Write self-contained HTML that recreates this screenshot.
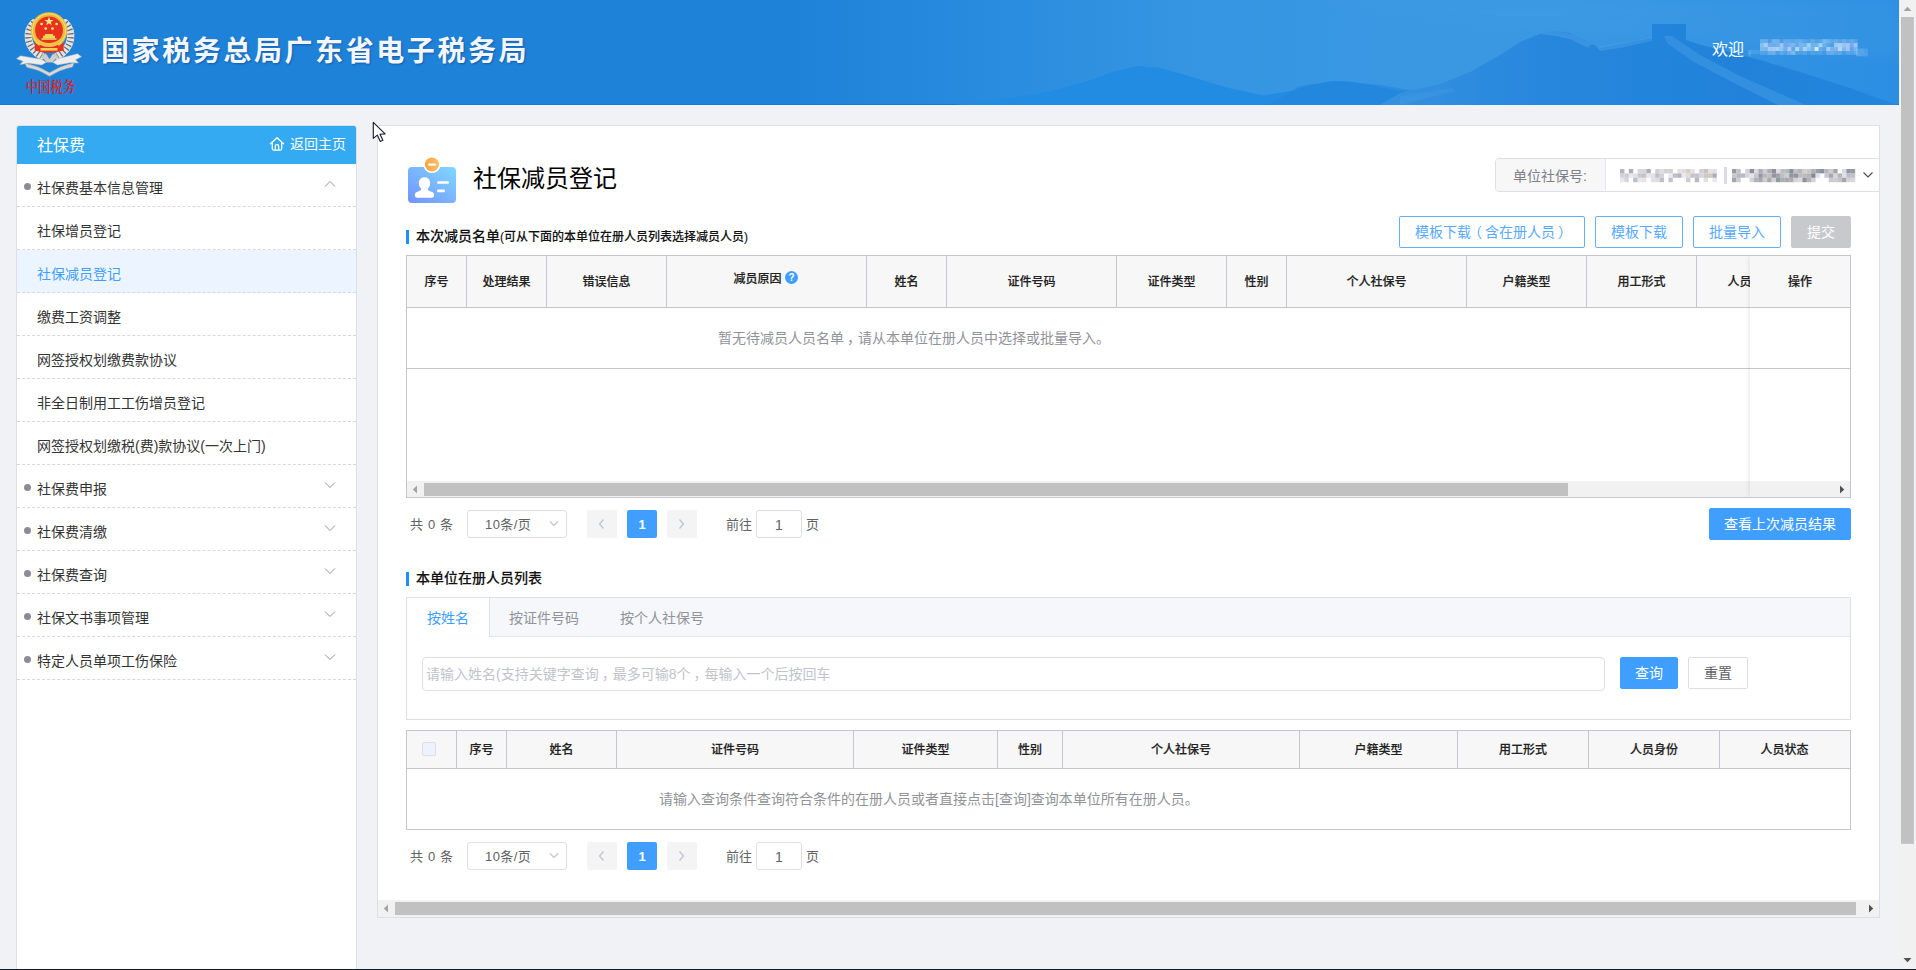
<!DOCTYPE html>
<html lang="zh-CN">
<head>
<meta charset="utf-8">
<title>社保减员登记</title>
<style>
*{box-sizing:border-box;margin:0;padding:0}
html,body{width:1916px;height:970px;overflow:hidden;background:#f0f2f5}
body{font-family:"Liberation Sans","Noto Sans CJK SC",sans-serif;font-size:14px;color:#333;position:relative}
.abs{position:absolute}
#hdr{left:0;top:0;width:1899px;height:105px;background:linear-gradient(90deg,#1e82d9 0,#1e82d9 790px,#2487db 900px,#2b8ddf 1017px,#3595e2 1184px,#3a98e3 1400px,#3a98e3 1560px,#3293e3 1760px,#2b8ee2 1899px);box-shadow:inset 0 -1px 0 #1479d6;overflow:hidden}
#hdr .ttl{left:101px;top:30px;font-size:28px;line-height:44px;font-weight:700;color:#f3f6fa;letter-spacing:2.58px;white-space:nowrap;text-shadow:1px 1px 2px rgba(0,0,50,.3)}
#hdr .wel{left:1712px;top:38px;font-size:16px;line-height:24px;color:#fff;white-space:nowrap}
/* scrollbar */
#vsb{left:1899px;top:0;width:17px;height:969px;background:#f1f1f1}
#vsb .th{left:2px;top:17px;width:13px;height:827px;background:#c1c1c1}
#bot{left:0;top:969px;width:1916px;height:1px;background:#0e1c2e}
/* sidebar */
#side{left:16px;top:125px;width:341px;height:860px;background:#fff;border:1px solid #dcdfe6;border-radius:3px 3px 0 0}
#side .sh{left:0;top:0;width:339px;height:38px;background:#33aaf1;border-radius:2px 2px 0 0;color:#fff}
#side .sh .t{left:20px;top:8px;font-size:16px;line-height:24px}
#side .sh .b{left:273px;top:8px;font-size:14px;line-height:20px;white-space:nowrap}
.mi{position:absolute;left:0;width:339px;height:43px;border-bottom:1px dashed #d9d9d9;font-size:14px;line-height:20px;color:#333}
.mi span{position:absolute;left:20px;top:14px;white-space:nowrap}
.mi.p:before{content:"";position:absolute;left:7px;top:19px;width:7px;height:7px;border-radius:50%;background:#8c8c96}
.mi.act{background:#ecf5ff;color:#409eff}
.mi svg{position:absolute;left:307px;top:16px}
/* main */
#main{left:377px;top:125px;width:1503px;height:793px;background:#fff;border:1px solid #dcdfe6}

/* layer */
#L{left:0;top:0;width:1879px;height:969px;overflow:hidden}
.t{position:absolute;white-space:nowrap}
.bar{position:absolute;left:406px;width:3px;height:14px;background:#1890ff}
.btn{position:absolute;height:32px;border:1px solid #62afff;border-radius:2px;background:#fff;color:#57a9ff;font-size:14px;line-height:30px;text-align:center;white-space:nowrap}
.btn.pri{background:#409eff;border-color:#409eff;color:#fff}
.btn.dis{background:#c8c9cc;border-color:#c8c9cc;color:#fff}
.btn.def{border-color:#dcdfe6;color:#606266}
.tb{position:absolute;border:1px solid #c4c7cf;background:#fff;overflow:hidden}
.th{position:absolute;top:0;background:#f7f7f7;border-right:1px solid #c4c7cf;border-bottom:1px solid #c4c7cf;font-size:12px;font-weight:500;-webkit-text-stroke:.18px #222;color:#222;text-align:center;white-space:nowrap}
.hl{position:absolute;left:0;height:1px;background:#c4c7cf}
.emp{position:absolute;font-size:14px;line-height:20px;color:#909399;white-space:nowrap}
.pg{position:absolute;left:0;width:1899px;height:28px;font-size:13px;color:#606266;line-height:28px}
.pg .t{top:1px}
.pg .sel{position:absolute;left:467px;top:0;width:100px;height:28px;border:1px solid #dcdfe6;border-radius:3px;background:#fff}
.pg .nb{position:absolute;top:0;width:30px;height:28px;border-radius:2px;background:#f4f4f5}
.pg .nb.on{background:#409eff;color:#fff;font-weight:700;text-align:center;line-height:30px}
.pg .inp{position:absolute;left:756px;top:0;width:46px;height:28px;border:1px solid #dcdfe6;border-radius:3px;background:#fff;text-align:center;line-height:28px;font-size:14px}
.pg svg{position:absolute}
.hsb{position:absolute;background:#f1f1f1}
.hsb i{position:absolute;background:#c1c1c1}
</style>
</head>
<body>
<div id="hdr" class="abs">
  <svg class="abs" style="left:0;top:0" width="1899" height="105" viewBox="0 0 1899 105">
    <defs>
      <filter id="b1" x="-5%" y="-20%" width="110%" height="140%"><feGaussianBlur stdDeviation="0.7"/></filter>
      <filter id="b2" x="-5%" y="-20%" width="110%" height="140%"><feGaussianBlur stdDeviation="6"/></filter>
      <linearGradient id="mg" gradientUnits="userSpaceOnUse" x1="1380" y1="0" x2="1899" y2="0"><stop offset="0" stop-color="#3592e1"/><stop offset=".2" stop-color="#2c8bde"/><stop offset=".36" stop-color="#2686dc"/><stop offset=".7" stop-color="#2182da"/><stop offset="1" stop-color="#2586dd"/></linearGradient>
    </defs>
    <path d="M1250 0 L1330 4 L1420 14 L1500 26 L1560 28 L1899 60 L1899 0Z" fill="#3f9be5" opacity=".35" filter="url(#b2)"/>
    <path d="M956 105 L1000 99 L1038 94 L1062 88 L1088 81 L1112 72 L1138 66 L1160 68 L1182 74 L1205 81 L1229 88 L1263 95.500 L1291 91 L1310 85 L1332 81 L1352 82 L1370 85 L1395 90 L1417 94 L1440 100 L1460 105Z" fill="#238ce2" filter="url(#b1)"/>
    <path d="M1270 105 L1300 86 L1340 81 L1380 85 L1420 92 L1460 105Z" fill="#2183da" opacity=".55" filter="url(#b1)"/>
    <path d="M1380 105 L1400 93 L1440 84 L1470 72 L1500 55 L1520 42 L1540 34 L1555 31 L1570 33 L1590 43 L1600 48 L1620 44 L1640 40 L1652 38 L1652 24 L1686 24 L1686 40 L1705 46 L1730 52 L1760 60 L1800 72 L1850 88 L1880 99 L1899 105Z" fill="url(#mg)" filter="url(#b1)"/>
    <path d="M1540 34 L1555 31 L1572 34 L1592 44 L1588 48 L1570 39 L1555 36Z" fill="#4a9fe6" opacity=".55" filter="url(#b1)"/>
    <path d="M1596 47 L1620 43 L1652 37 L1652 41 L1620 48 L1600 51Z" fill="#4a9fe6" opacity=".5" filter="url(#b1)"/>
    <path d="M1664 36 L1672 36 L1700 55 L1740 76 L1790 98 L1806 105 L1778 105 L1736 84 L1694 62 L1668 44Z" fill="#4a9fe6" opacity=".45" filter="url(#b1)"/>
    <path d="M1400 96 L1452 88 L1455 91 L1415 101 L1400 105Z" fill="#4a9fe6" opacity=".3" filter="url(#b1)"/>
  </svg>
  <svg class="abs" style="left:8px;top:4px" width="80" height="96" viewBox="0 0 80 96">
    <defs><filter id="lb"><feGaussianBlur stdDeviation="0.35"/></filter></defs>
    <g filter="url(#lb)">
    <path d="M25.800 19 C17.300 27 17.800 43.500 33.500 52" fill="none" stroke="#e4e4e4" stroke-width="7.400" stroke-linecap="round"/>
    <path d="M57.200 19 C65.700 27 65.200 43.500 49.500 52" fill="none" stroke="#e4e4e4" stroke-width="7.400" stroke-linecap="round"/>
    <path d="M25.800 19 C17.300 27 17.800 43.500 33.500 52" fill="none" stroke="#4a4a4a" stroke-width="6.200" stroke-dasharray="1.200 2.700" opacity=".8"/>
    <path d="M57.200 19 C65.700 27 65.200 43.500 49.500 52" fill="none" stroke="#4a4a4a" stroke-width="6.200" stroke-dasharray="1.200 2.700" opacity=".8"/>
    <path d="M8.500 54.800 L12.500 51.800 L33 55.300 L38.500 58.200 L33.500 61 L21 59.200 L12 60.500 L15 57.300Z" fill="#ededed" stroke="#b9b9b9" stroke-width=".5"/>
    <path d="M73.500 52.800 L69.500 49.800 L50 54.800 L44.500 58.200 L49.500 61 L62 58.700 L70.500 59 L67.500 55.800Z" fill="#ededed" stroke="#b9b9b9" stroke-width=".5"/>
    <path d="M17 59.500 Q30 61.500 41.500 68.800 Q53 61.500 66 59 L64.500 63 Q52 65.500 41.500 72.300 Q31 65.500 18.800 63.300Z" fill="#d9d9d9" stroke="#a8a8a8" stroke-width=".5"/>
    <path d="M33 52 L38 49.500 L41.500 55 L45 49.500 L50 52 L44.500 58.500 L38.500 58.500Z" fill="#cfcfcf" stroke="#8a8a8a" stroke-width=".4"/>
    <path d="M27 37.500 L26.600 46.500 Q34 48.800 41 48.800 Q48 48.800 55.800 46.500 L55.200 37.500Z" fill="#e8301f"/>
    <circle cx="41" cy="26.500" r="18.300" fill="#e9b93b"/>
    <circle cx="41" cy="26.500" r="16.600" fill="none" stroke="#f6d96b" stroke-width="1.100"/>
    <circle cx="41" cy="26.300" r="13.900" fill="#e9301f"/>
    <path d="M29.500 34.500 Q41 43.500 52.500 34.500 L53.500 37.500 Q41 47 28.500 37.500Z" fill="#edc345"/>
    <path d="M31.500 40.500 Q41 45.500 50.500 40.500 L50.500 44.500 Q41 48 31.500 44.500Z" fill="#e8301f"/>
    <rect x="32.500" y="44" width="17" height="2.600" fill="#f0cf55"/>
    <path d="M35 34.600 L35 31.800 L36.500 31.800 L37.200 30 L44.800 30 L45.500 31.800 L47 31.800 L47 34.600Z" fill="#f3d45c"/>
    <rect x="33.500" y="34.300" width="15" height="1.500" fill="#f3d45c"/>
    <path d="M41 12.800 L42.150 15.900 L45.450 16 L42.850 18 L43.750 21.200 L41 19.350 L38.250 21.200 L39.150 18 L36.550 16 L39.850 15.900Z" fill="#ffe88a"/>
    <g fill="#ffe88a"><circle cx="33.600" cy="20" r="1.350"/><circle cx="48.600" cy="20" r="1.350"/><circle cx="37.700" cy="24.600" r="1.350"/><circle cx="44.500" cy="24.600" r="1.350"/></g>
    </g>
    <text x="42.500" y="73.200" font-family="'Liberation Serif','Noto Serif CJK SC',serif" font-size="12.400" font-weight="600" fill="#dc1f1c" text-anchor="middle" transform="scale(1,1.2)">中国税务</text>
  </svg>
  <div class="abs ttl">国家税务总局广东省电子税务局</div>
  <div class="abs wel">欢迎<span style="margin-left:4px;font-size:12px;opacity:.25">,</span></div>
  <svg class="abs" style="left:1758px;top:37px;overflow:visible" width="112" height="22" viewBox="0 0 112 22"><defs><filter id="nb"><feGaussianBlur stdDeviation="0.5"/></filter></defs><g filter="url(#nb)"><rect x="2.0" y="2.2" width="4.0" height="4.0" fill="#e8f2ff" opacity="0.26"/><rect x="5.9" y="2.2" width="4.0" height="4.0" fill="#cfeaff" opacity="0.30"/><rect x="9.8" y="2.2" width="4.0" height="4.0" fill="#d8d0ff" opacity="0.13"/><rect x="13.7" y="2.2" width="4.0" height="4.0" fill="#ffffff" opacity="0.30"/><rect x="17.6" y="2.2" width="4.0" height="4.0" fill="#ffffff" opacity="0.27"/><rect x="21.5" y="2.2" width="4.0" height="4.0" fill="#d8d0ff" opacity="0.15"/><rect x="25.4" y="2.2" width="4.0" height="4.0" fill="#d8d0ff" opacity="0.32"/><rect x="29.3" y="2.2" width="4.0" height="4.0" fill="#cfeaff" opacity="0.25"/><rect x="33.2" y="2.2" width="4.0" height="4.0" fill="#ffffff" opacity="0.18"/><rect x="37.1" y="2.2" width="4.0" height="4.0" fill="#ffffff" opacity="0.21"/><rect x="41.0" y="2.2" width="4.0" height="4.0" fill="#d8d0ff" opacity="0.33"/><rect x="44.9" y="2.2" width="4.0" height="4.0" fill="#ffffff" opacity="0.16"/><rect x="48.8" y="2.2" width="4.0" height="4.0" fill="#cfeaff" opacity="0.15"/><rect x="52.7" y="2.2" width="4.0" height="4.0" fill="#ffffff" opacity="0.22"/><rect x="56.6" y="2.2" width="4.0" height="4.0" fill="#ffffff" opacity="0.12"/><rect x="60.5" y="2.2" width="4.0" height="4.0" fill="#ffffff" opacity="0.17"/><rect x="64.4" y="2.2" width="4.0" height="4.0" fill="#ffffff" opacity="0.34"/><rect x="68.3" y="2.2" width="4.0" height="4.0" fill="#e8f2ff" opacity="0.32"/><rect x="72.2" y="2.2" width="4.0" height="4.0" fill="#ffffff" opacity="0.19"/><rect x="76.1" y="2.2" width="4.0" height="4.0" fill="#ffffff" opacity="0.24"/><rect x="80.0" y="2.2" width="4.0" height="4.0" fill="#ffffff" opacity="0.16"/><rect x="83.9" y="2.2" width="4.0" height="4.0" fill="#d8d0ff" opacity="0.34"/><rect x="87.8" y="2.2" width="4.0" height="4.0" fill="#e8f2ff" opacity="0.19"/><rect x="91.7" y="2.2" width="4.0" height="4.0" fill="#ffffff" opacity="0.22"/><rect x="95.6" y="2.2" width="4.0" height="4.0" fill="#e8f2ff" opacity="0.18"/><rect x="2.0" y="6.1" width="4.0" height="4.0" fill="#ffffff" opacity="0.40"/><rect x="5.9" y="6.1" width="4.0" height="4.0" fill="#ffffff" opacity="0.55"/><rect x="9.8" y="6.1" width="4.0" height="4.0" fill="#d8d0ff" opacity="0.40"/><rect x="13.7" y="6.1" width="4.0" height="4.0" fill="#ffffff" opacity="0.24"/><rect x="17.6" y="6.1" width="4.0" height="4.0" fill="#ffffff" opacity="0.28"/><rect x="21.5" y="6.1" width="4.0" height="4.0" fill="#d8d0ff" opacity="0.72"/><rect x="25.4" y="6.1" width="4.0" height="4.0" fill="#e8f2ff" opacity="0.26"/><rect x="29.3" y="6.1" width="4.0" height="4.0" fill="#d8d0ff" opacity="0.44"/><rect x="33.2" y="6.1" width="4.0" height="4.0" fill="#ffffff" opacity="0.34"/><rect x="37.1" y="6.1" width="4.0" height="4.0" fill="#d8d0ff" opacity="0.31"/><rect x="41.0" y="6.1" width="4.0" height="4.0" fill="#cfeaff" opacity="0.42"/><rect x="44.9" y="6.1" width="4.0" height="4.0" fill="#cfeaff" opacity="0.38"/><rect x="48.8" y="6.1" width="4.0" height="4.0" fill="#e8f2ff" opacity="0.62"/><rect x="52.7" y="6.1" width="4.0" height="4.0" fill="#ffffff" opacity="0.27"/><rect x="56.6" y="6.1" width="4.0" height="4.0" fill="#e8f2ff" opacity="0.35"/><rect x="60.5" y="6.1" width="4.0" height="4.0" fill="#cfeaff" opacity="0.71"/><rect x="64.4" y="6.1" width="4.0" height="4.0" fill="#e8f2ff" opacity="0.30"/><rect x="68.3" y="6.1" width="4.0" height="4.0" fill="#e8f2ff" opacity="0.18"/><rect x="72.2" y="6.1" width="4.0" height="4.0" fill="#cfeaff" opacity="0.16"/><rect x="76.1" y="6.1" width="4.0" height="4.0" fill="#ffffff" opacity="0.52"/><rect x="80.0" y="6.1" width="4.0" height="4.0" fill="#e8f2ff" opacity="0.62"/><rect x="83.9" y="6.1" width="4.0" height="4.0" fill="#ffffff" opacity="0.48"/><rect x="87.8" y="6.1" width="4.0" height="4.0" fill="#d8d0ff" opacity="0.74"/><rect x="91.7" y="6.1" width="4.0" height="4.0" fill="#cfeaff" opacity="0.35"/><rect x="95.6" y="6.1" width="4.0" height="4.0" fill="#d8d0ff" opacity="0.72"/><rect x="2.0" y="10.0" width="4.0" height="4.0" fill="#ffffff" opacity="0.35"/><rect x="5.9" y="10.0" width="4.0" height="4.0" fill="#ffffff" opacity="0.33"/><rect x="9.8" y="10.0" width="4.0" height="4.0" fill="#ffffff" opacity="0.53"/><rect x="13.7" y="10.0" width="4.0" height="4.0" fill="#d8d0ff" opacity="0.79"/><rect x="17.6" y="10.0" width="4.0" height="4.0" fill="#e8f2ff" opacity="0.64"/><rect x="21.5" y="10.0" width="4.0" height="4.0" fill="#ffffff" opacity="0.45"/><rect x="25.4" y="10.0" width="4.0" height="4.0" fill="#cfeaff" opacity="0.36"/><rect x="29.3" y="10.0" width="4.0" height="4.0" fill="#d8d0ff" opacity="0.78"/><rect x="33.2" y="10.0" width="4.0" height="4.0" fill="#cfeaff" opacity="0.25"/><rect x="37.1" y="10.0" width="4.0" height="4.0" fill="#e8f2ff" opacity="0.69"/><rect x="41.0" y="10.0" width="4.0" height="4.0" fill="#e8f2ff" opacity="0.33"/><rect x="44.9" y="10.0" width="4.0" height="4.0" fill="#e8f2ff" opacity="0.65"/><rect x="48.8" y="10.0" width="4.0" height="4.0" fill="#e8f2ff" opacity="0.48"/><rect x="52.7" y="10.0" width="4.0" height="4.0" fill="#e8f2ff" opacity="0.35"/><rect x="56.6" y="10.0" width="4.0" height="4.0" fill="#ffffff" opacity="0.78"/><rect x="60.5" y="10.0" width="4.0" height="4.0" fill="#e8f2ff" opacity="0.26"/><rect x="64.4" y="10.0" width="4.0" height="4.0" fill="#cfeaff" opacity="0.21"/><rect x="68.3" y="10.0" width="4.0" height="4.0" fill="#e8f2ff" opacity="0.62"/><rect x="72.2" y="10.0" width="4.0" height="4.0" fill="#d8d0ff" opacity="0.44"/><rect x="76.1" y="10.0" width="4.0" height="4.0" fill="#d8d0ff" opacity="0.48"/><rect x="80.0" y="10.0" width="4.0" height="4.0" fill="#cfeaff" opacity="0.79"/><rect x="83.9" y="10.0" width="4.0" height="4.0" fill="#ffffff" opacity="0.37"/><rect x="87.8" y="10.0" width="4.0" height="4.0" fill="#d8d0ff" opacity="0.72"/><rect x="91.7" y="10.0" width="4.0" height="4.0" fill="#d8d0ff" opacity="0.28"/><rect x="95.6" y="10.0" width="4.0" height="4.0" fill="#cfeaff" opacity="0.39"/><rect x="2.0" y="13.9" width="4.0" height="4.0" fill="#d8d0ff" opacity="0.23"/><rect x="5.9" y="13.9" width="4.0" height="4.0" fill="#cfeaff" opacity="0.18"/><rect x="9.8" y="13.9" width="4.0" height="4.0" fill="#e8f2ff" opacity="0.29"/><rect x="13.7" y="13.9" width="4.0" height="4.0" fill="#ffffff" opacity="0.28"/><rect x="17.6" y="13.9" width="4.0" height="4.0" fill="#cfeaff" opacity="0.15"/><rect x="21.5" y="13.9" width="4.0" height="4.0" fill="#ffffff" opacity="0.21"/><rect x="25.4" y="13.9" width="4.0" height="4.0" fill="#ffffff" opacity="0.15"/><rect x="29.3" y="13.9" width="4.0" height="4.0" fill="#ffffff" opacity="0.26"/><rect x="33.2" y="13.9" width="4.0" height="4.0" fill="#ffffff" opacity="0.35"/><rect x="37.1" y="13.9" width="4.0" height="4.0" fill="#ffffff" opacity="0.14"/><rect x="41.0" y="13.9" width="4.0" height="4.0" fill="#ffffff" opacity="0.13"/><rect x="44.9" y="13.9" width="4.0" height="4.0" fill="#cfeaff" opacity="0.22"/><rect x="48.8" y="13.9" width="4.0" height="4.0" fill="#d8d0ff" opacity="0.11"/><rect x="52.7" y="13.9" width="4.0" height="4.0" fill="#cfeaff" opacity="0.19"/><rect x="56.6" y="13.9" width="4.0" height="4.0" fill="#ffffff" opacity="0.12"/><rect x="60.5" y="13.9" width="4.0" height="4.0" fill="#e8f2ff" opacity="0.16"/><rect x="64.4" y="13.9" width="4.0" height="4.0" fill="#d8d0ff" opacity="0.10"/><rect x="68.3" y="13.9" width="4.0" height="4.0" fill="#d8d0ff" opacity="0.34"/><rect x="72.2" y="13.9" width="4.0" height="4.0" fill="#cfeaff" opacity="0.32"/><rect x="76.1" y="13.9" width="4.0" height="4.0" fill="#ffffff" opacity="0.19"/><rect x="80.0" y="13.9" width="4.0" height="4.0" fill="#e8f2ff" opacity="0.24"/><rect x="83.9" y="13.9" width="4.0" height="4.0" fill="#cfeaff" opacity="0.12"/><rect x="87.8" y="13.9" width="4.0" height="4.0" fill="#cfeaff" opacity="0.23"/><rect x="91.7" y="13.9" width="4.0" height="4.0" fill="#e8f2ff" opacity="0.17"/><rect x="95.6" y="13.9" width="4.0" height="4.0" fill="#d8d0ff" opacity="0.30"/><rect x="98.0" y="11.5" width="4.0" height="4.0" fill="#fff" opacity="0.15"/><rect x="98.0" y="15.4" width="4.0" height="4.0" fill="#fff" opacity="0.17"/><rect x="101.9" y="11.5" width="4.0" height="4.0" fill="#fff" opacity="0.16"/><rect x="101.9" y="15.4" width="4.0" height="4.0" fill="#fff" opacity="0.16"/><rect x="105.8" y="11.5" width="4.0" height="4.0" fill="#fff" opacity="0.12"/><rect x="105.8" y="15.4" width="4.0" height="4.0" fill="#fff" opacity="0.15"/><rect x="-10.0" y="12.9" width="4.0" height="4.0" fill="#fff" opacity="0.14"/><rect x="-6.1" y="12.9" width="4.0" height="4.0" fill="#fff" opacity="0.10"/><rect x="-2.2" y="12.9" width="4.0" height="4.0" fill="#fff" opacity="0.10"/></g></svg>
</div>
<div id="vsb" class="abs"><div class="abs th"></div><svg class="abs" style="left:4px;top:6px" width="9" height="6" viewBox="0 0 9 6"><path d="M0.500 5 L4.500 0.800 L8.500 5z" fill="#a3a3a3"/></svg><svg class="abs" style="left:4px;top:957px" width="9" height="6" viewBox="0 0 9 6"><path d="M0.500 1 L4.500 5.200 L8.500 1z" fill="#505050"/></svg></div>

<div id="side" class="abs">
  <div class="abs sh"><div class="abs t">社保费</div><svg class="abs" style="left:252px;top:10px" width="16" height="16" viewBox="0 0 16 16"><path d="M1.500 7.800 L8 1.700 L14.500 7.800 M3.300 6.600 V12.700 Q3.300 14.200 4.800 14.200 H11.200 Q12.700 14.200 12.700 12.700 V6.600 M6.300 14.200 V10.200 Q6.300 8.700 8 8.700 Q9.700 8.700 9.700 10.200 V14.200" fill="none" stroke="#fff" stroke-width="1.300" stroke-linejoin="round" stroke-linecap="round"/></svg><div class="abs b">返回主页</div></div>
  <div class="mi p" style="top:38px"><span>社保费基本信息管理</span><svg width="12" height="8" viewBox="0 0 12 8"><path d="M1 6.500 L6 1.500 L11 6.500" fill="none" stroke="#909399" stroke-width="1"/></svg></div>
  <div class="mi" style="top:81px"><span>社保增员登记</span></div>
  <div class="mi act" style="top:124px"><span>社保减员登记</span></div>
  <div class="mi" style="top:167px"><span>缴费工资调整</span></div>
  <div class="mi" style="top:210px"><span>网签授权划缴费款协议</span></div>
  <div class="mi" style="top:253px"><span>非全日制用工工伤增员登记</span></div>
  <div class="mi" style="top:296px"><span>网签授权划缴税(费)款协议(一次上门)</span></div>
  <div class="mi p" style="top:339px"><span>社保费申报</span><svg width="12" height="8" viewBox="0 0 12 8"><path d="M1 1.500 L6 6.500 L11 1.500" fill="none" stroke="#909399" stroke-width="1"/></svg></div>
  <div class="mi p" style="top:382px"><span>社保费清缴</span><svg width="12" height="8" viewBox="0 0 12 8"><path d="M1 1.500 L6 6.500 L11 1.500" fill="none" stroke="#909399" stroke-width="1"/></svg></div>
  <div class="mi p" style="top:425px"><span>社保费查询</span><svg width="12" height="8" viewBox="0 0 12 8"><path d="M1 1.500 L6 6.500 L11 1.500" fill="none" stroke="#909399" stroke-width="1"/></svg></div>
  <div class="mi p" style="top:468px"><span>社保文书事项管理</span><svg width="12" height="8" viewBox="0 0 12 8"><path d="M1 1.500 L6 6.500 L11 1.500" fill="none" stroke="#909399" stroke-width="1"/></svg></div>
  <div class="mi p" style="top:511px"><span>特定人员单项工伤保险</span><svg width="12" height="8" viewBox="0 0 12 8"><path d="M1 1.500 L6 6.500 L11 1.500" fill="none" stroke="#909399" stroke-width="1"/></svg></div>
</div>

<div id="main" class="abs"></div>

<div id="L" class="abs">
  <!-- title -->
  <svg class="abs" style="left:404px;top:152px" width="56" height="56" viewBox="0 0 56 56">
    <defs><linearGradient id="g1" x1="0" y1="1" x2="1" y2="0"><stop offset="0" stop-color="#7392ff"/><stop offset="1" stop-color="#80d8ff"/></linearGradient>
    <linearGradient id="g2" x1="0" y1="0" x2="1" y2="0"><stop offset="0" stop-color="#ffa53a"/><stop offset="1" stop-color="#ffbf6e"/></linearGradient></defs>
    <rect x="4" y="15" width="48" height="36" rx="4" fill="url(#g1)"/>
    <circle cx="28" cy="12.5" r="8.6" fill="#fff"/>
    <circle cx="28" cy="12.5" r="7.1" fill="url(#g2)"/>
    <rect x="24" y="11.4" width="8" height="2.4" rx="1.2" fill="#fff"/>
    <path transform="translate(0,1.500)" d="M20.5 23.8c3.4 0 5.7 2.6 5.7 6 0 2.3-1 3.9-2.200 5.200 -0.500 0.600 -0.300 1.600 0.500 2 l3.600 1.500 c1.400 0.600 2.100 1.700 2.100 3.200 0 1.500-1 2.500-2.500 2.500 h-14.400 c-1.500 0-2.500-1-2.500-2.500 0-1.500 0.700-2.600 2.100-3.200 l3.600-1.500 c0.800-0.400 1-1.400 0.500-2 -1.200-1.300-2.200-2.900-2.200-5.200 0-3.400 2.300-6 5.700-6z" fill="#fff"/>
    <rect x="33" y="29.200" width="12" height="2.600" rx="1.300" fill="#fff"/>
    <rect x="33" y="37.600" width="8" height="2.600" rx="1.300" fill="#fff"/>
  </svg>
  <div class="t" style="left:473px;top:161px;font-size:24px;line-height:36px;color:#000">社保减员登记</div>

  <!-- unit select -->
  <div class="abs" style="left:1495px;top:158px;width:390px;height:34px;border:1px solid #dcdfe6;border-radius:4px;background:#fff"></div>
  <div class="abs" style="left:1496px;top:159px;width:110px;height:32px;background:#f7f7f8;border-radius:3px 0 0 3px;border-right:1px solid #e4e7ed"></div>
  <div class="t" style="left:1513px;top:166px;font-size:14px;line-height:20px;color:#7d8087">单位社保号:</div>
  <svg class="abs" style="left:1618px;top:167px" width="242" height="17" viewBox="0 0 242 17"><defs><filter id="mb"><feGaussianBlur stdDeviation="0.45"/></filter></defs><g filter="url(#mb)"><rect x="2.0" y="2.0" width="4.4" height="4.4" fill="#9c93a8" opacity="0.70"/><rect x="10.8" y="2.0" width="4.4" height="4.4" fill="#9c93a8" opacity="0.78"/><rect x="19.6" y="2.0" width="4.4" height="4.4" fill="#b4bccb" opacity="0.56"/><rect x="24.0" y="2.0" width="4.4" height="4.4" fill="#c9c9cf" opacity="0.77"/><rect x="28.4" y="2.0" width="4.4" height="4.4" fill="#9c93a8" opacity="0.79"/><rect x="37.2" y="2.0" width="4.4" height="4.4" fill="#c9c9cf" opacity="0.87"/><rect x="41.6" y="2.0" width="4.4" height="4.4" fill="#c9c9cf" opacity="0.59"/><rect x="46.0" y="2.0" width="4.4" height="4.4" fill="#c9c9cf" opacity="0.85"/><rect x="50.4" y="2.0" width="4.4" height="4.4" fill="#c8bdb4" opacity="0.73"/><rect x="59.2" y="2.0" width="4.4" height="4.4" fill="#d6d6da" opacity="0.71"/><rect x="63.6" y="2.0" width="4.4" height="4.4" fill="#d6d6da" opacity="0.82"/><rect x="68.0" y="2.0" width="4.4" height="4.4" fill="#c8bdb4" opacity="0.73"/><rect x="72.4" y="2.0" width="4.4" height="4.4" fill="#d6d6da" opacity="0.68"/><rect x="81.2" y="2.0" width="4.4" height="4.4" fill="#c9c9cf" opacity="0.88"/><rect x="85.6" y="2.0" width="4.4" height="4.4" fill="#c8bdb4" opacity="0.92"/><rect x="90.0" y="2.0" width="4.4" height="4.4" fill="#e0e0e4" opacity="0.94"/><rect x="94.4" y="2.0" width="4.4" height="4.4" fill="#d6d6da" opacity="0.75"/><rect x="2.0" y="6.4" width="4.4" height="4.4" fill="#b4bccb" opacity="0.65"/><rect x="6.4" y="6.4" width="4.4" height="4.4" fill="#c9c9cf" opacity="0.93"/><rect x="10.8" y="6.4" width="4.4" height="4.4" fill="#d6d6da" opacity="0.56"/><rect x="15.2" y="6.4" width="4.4" height="4.4" fill="#c9c9cf" opacity="0.53"/><rect x="19.6" y="6.4" width="4.4" height="4.4" fill="#bdbdc6" opacity="0.81"/><rect x="24.0" y="6.4" width="4.4" height="4.4" fill="#c8bdb4" opacity="0.94"/><rect x="28.4" y="6.4" width="4.4" height="4.4" fill="#e0e0e4" opacity="0.79"/><rect x="32.8" y="6.4" width="4.4" height="4.4" fill="#e0e0e4" opacity="0.95"/><rect x="37.2" y="6.4" width="4.4" height="4.4" fill="#b4bccb" opacity="0.95"/><rect x="41.6" y="6.4" width="4.4" height="4.4" fill="#bdbdc6" opacity="0.68"/><rect x="50.4" y="6.4" width="4.4" height="4.4" fill="#d6d6da" opacity="0.52"/><rect x="54.8" y="6.4" width="4.4" height="4.4" fill="#9c93a8" opacity="0.62"/><rect x="59.2" y="6.4" width="4.4" height="4.4" fill="#a9a9b3" opacity="0.87"/><rect x="63.6" y="6.4" width="4.4" height="4.4" fill="#d6d6da" opacity="0.54"/><rect x="68.0" y="6.4" width="4.4" height="4.4" fill="#c8bdb4" opacity="0.51"/><rect x="72.4" y="6.4" width="4.4" height="4.4" fill="#9c93a8" opacity="0.56"/><rect x="76.8" y="6.4" width="4.4" height="4.4" fill="#bdbdc6" opacity="0.89"/><rect x="81.2" y="6.4" width="4.4" height="4.4" fill="#bdbdc6" opacity="0.64"/><rect x="85.6" y="6.4" width="4.4" height="4.4" fill="#c8bdb4" opacity="0.83"/><rect x="90.0" y="6.4" width="4.4" height="4.4" fill="#c8bdb4" opacity="0.81"/><rect x="94.4" y="6.4" width="4.4" height="4.4" fill="#9c93a8" opacity="0.77"/><rect x="2.0" y="10.8" width="4.4" height="4.4" fill="#d6d6da" opacity="0.55"/><rect x="6.4" y="10.8" width="4.4" height="4.4" fill="#b4bccb" opacity="0.61"/><rect x="15.2" y="10.8" width="4.4" height="4.4" fill="#9c93a8" opacity="0.63"/><rect x="19.6" y="10.8" width="4.4" height="4.4" fill="#d6d6da" opacity="0.56"/><rect x="24.0" y="10.8" width="4.4" height="4.4" fill="#d6d6da" opacity="0.63"/><rect x="32.8" y="10.8" width="4.4" height="4.4" fill="#c9c9cf" opacity="0.53"/><rect x="37.2" y="10.8" width="4.4" height="4.4" fill="#c8bdb4" opacity="0.53"/><rect x="41.6" y="10.8" width="4.4" height="4.4" fill="#a9a9b3" opacity="0.74"/><rect x="50.4" y="10.8" width="4.4" height="4.4" fill="#bdbdc6" opacity="0.90"/><rect x="68.0" y="10.8" width="4.4" height="4.4" fill="#bdbdc6" opacity="0.77"/><rect x="76.8" y="10.8" width="4.4" height="4.4" fill="#a9a9b3" opacity="0.82"/><rect x="85.6" y="10.8" width="4.4" height="4.4" fill="#d6d6da" opacity="0.72"/><rect x="94.4" y="10.8" width="4.4" height="4.4" fill="#d6d6da" opacity="0.53"/><rect x="106" y="0" width="3" height="17" fill="#cfd3da" opacity=".8"/><rect x="114.0" y="2.0" width="4.4" height="4.4" fill="#8f8f98" opacity="0.91"/><rect x="118.4" y="2.0" width="4.4" height="4.4" fill="#b9b9c2" opacity="0.86"/><rect x="127.2" y="2.0" width="4.4" height="4.4" fill="#cfcfd6" opacity="0.91"/><rect x="131.6" y="2.0" width="4.4" height="4.4" fill="#8a8390" opacity="0.92"/><rect x="136.0" y="2.0" width="4.4" height="4.4" fill="#cfcfd6" opacity="0.76"/><rect x="140.4" y="2.0" width="4.4" height="4.4" fill="#8a8390" opacity="0.67"/><rect x="144.8" y="2.0" width="4.4" height="4.4" fill="#a3a3ad" opacity="0.54"/><rect x="149.2" y="2.0" width="4.4" height="4.4" fill="#9aa7b5" opacity="0.90"/><rect x="153.6" y="2.0" width="4.4" height="4.4" fill="#8a8390" opacity="0.92"/><rect x="158.0" y="2.0" width="4.4" height="4.4" fill="#cfcfd6" opacity="0.70"/><rect x="162.4" y="2.0" width="4.4" height="4.4" fill="#a3a3ad" opacity="0.73"/><rect x="166.8" y="2.0" width="4.4" height="4.4" fill="#9aa7b5" opacity="0.77"/><rect x="171.2" y="2.0" width="4.4" height="4.4" fill="#7e8794" opacity="0.93"/><rect x="175.6" y="2.0" width="4.4" height="4.4" fill="#b0b0b8" opacity="0.80"/><rect x="180.0" y="2.0" width="4.4" height="4.4" fill="#8f8f98" opacity="0.67"/><rect x="184.4" y="2.0" width="4.4" height="4.4" fill="#b0b0b8" opacity="0.59"/><rect x="188.8" y="2.0" width="4.4" height="4.4" fill="#c4b9ad" opacity="0.80"/><rect x="193.2" y="2.0" width="4.4" height="4.4" fill="#7e8794" opacity="0.65"/><rect x="197.6" y="2.0" width="4.4" height="4.4" fill="#7e8794" opacity="0.79"/><rect x="202.0" y="2.0" width="4.4" height="4.4" fill="#7e8794" opacity="0.90"/><rect x="206.4" y="2.0" width="4.4" height="4.4" fill="#b0b0b8" opacity="0.91"/><rect x="210.8" y="2.0" width="4.4" height="4.4" fill="#b9b9c2" opacity="0.72"/><rect x="215.2" y="2.0" width="4.4" height="4.4" fill="#8f8f98" opacity="0.82"/><rect x="224.0" y="2.0" width="4.4" height="4.4" fill="#b9b9c2" opacity="0.55"/><rect x="228.4" y="2.0" width="4.4" height="4.4" fill="#7e8794" opacity="0.87"/><rect x="232.8" y="2.0" width="4.4" height="4.4" fill="#6f7681" opacity="0.72"/><rect x="114.0" y="6.4" width="4.4" height="4.4" fill="#b0b0b8" opacity="0.70"/><rect x="118.4" y="6.4" width="4.4" height="4.4" fill="#8f8f98" opacity="0.63"/><rect x="122.8" y="6.4" width="4.4" height="4.4" fill="#9aa7b5" opacity="0.76"/><rect x="127.2" y="6.4" width="4.4" height="4.4" fill="#b0b0b8" opacity="0.51"/><rect x="131.6" y="6.4" width="4.4" height="4.4" fill="#cfcfd6" opacity="0.59"/><rect x="136.0" y="6.4" width="4.4" height="4.4" fill="#9aa7b5" opacity="0.61"/><rect x="140.4" y="6.4" width="4.4" height="4.4" fill="#8f8f98" opacity="0.94"/><rect x="144.8" y="6.4" width="4.4" height="4.4" fill="#a3a3ad" opacity="0.78"/><rect x="149.2" y="6.4" width="4.4" height="4.4" fill="#c4b9ad" opacity="0.93"/><rect x="153.6" y="6.4" width="4.4" height="4.4" fill="#7e8794" opacity="0.87"/><rect x="158.0" y="6.4" width="4.4" height="4.4" fill="#8f8f98" opacity="0.84"/><rect x="162.4" y="6.4" width="4.4" height="4.4" fill="#8f8f98" opacity="0.58"/><rect x="166.8" y="6.4" width="4.4" height="4.4" fill="#c4b9ad" opacity="0.74"/><rect x="171.2" y="6.4" width="4.4" height="4.4" fill="#6f7681" opacity="0.78"/><rect x="175.6" y="6.4" width="4.4" height="4.4" fill="#8a8390" opacity="0.88"/><rect x="180.0" y="6.4" width="4.4" height="4.4" fill="#7e8794" opacity="0.54"/><rect x="184.4" y="6.4" width="4.4" height="4.4" fill="#8a8390" opacity="0.56"/><rect x="188.8" y="6.4" width="4.4" height="4.4" fill="#8f8f98" opacity="0.67"/><rect x="193.2" y="6.4" width="4.4" height="4.4" fill="#6f7681" opacity="0.86"/><rect x="197.6" y="6.4" width="4.4" height="4.4" fill="#cfcfd6" opacity="0.65"/><rect x="206.4" y="6.4" width="4.4" height="4.4" fill="#a3a3ad" opacity="0.60"/><rect x="210.8" y="6.4" width="4.4" height="4.4" fill="#a3a3ad" opacity="0.94"/><rect x="215.2" y="6.4" width="4.4" height="4.4" fill="#c4b9ad" opacity="0.62"/><rect x="219.6" y="6.4" width="4.4" height="4.4" fill="#8f8f98" opacity="0.66"/><rect x="224.0" y="6.4" width="4.4" height="4.4" fill="#cfcfd6" opacity="0.65"/><rect x="228.4" y="6.4" width="4.4" height="4.4" fill="#9aa7b5" opacity="0.72"/><rect x="232.8" y="6.4" width="4.4" height="4.4" fill="#a3a3ad" opacity="0.69"/><rect x="114.0" y="10.8" width="4.4" height="4.4" fill="#6f7681" opacity="0.65"/><rect x="118.4" y="10.8" width="4.4" height="4.4" fill="#b9b9c2" opacity="0.71"/><rect x="131.6" y="10.8" width="4.4" height="4.4" fill="#cfcfd6" opacity="0.93"/><rect x="136.0" y="10.8" width="4.4" height="4.4" fill="#a3a3ad" opacity="0.84"/><rect x="140.4" y="10.8" width="4.4" height="4.4" fill="#6f7681" opacity="0.63"/><rect x="144.8" y="10.8" width="4.4" height="4.4" fill="#b9b9c2" opacity="0.74"/><rect x="149.2" y="10.8" width="4.4" height="4.4" fill="#6f7681" opacity="0.62"/><rect x="153.6" y="10.8" width="4.4" height="4.4" fill="#b0b0b8" opacity="0.59"/><rect x="158.0" y="10.8" width="4.4" height="4.4" fill="#6f7681" opacity="0.74"/><rect x="162.4" y="10.8" width="4.4" height="4.4" fill="#7e8794" opacity="0.68"/><rect x="166.8" y="10.8" width="4.4" height="4.4" fill="#8f8f98" opacity="0.77"/><rect x="171.2" y="10.8" width="4.4" height="4.4" fill="#8f8f98" opacity="0.73"/><rect x="175.6" y="10.8" width="4.4" height="4.4" fill="#b0b0b8" opacity="0.55"/><rect x="180.0" y="10.8" width="4.4" height="4.4" fill="#b9b9c2" opacity="0.53"/><rect x="184.4" y="10.8" width="4.4" height="4.4" fill="#8a8390" opacity="0.91"/><rect x="188.8" y="10.8" width="4.4" height="4.4" fill="#8a8390" opacity="0.62"/><rect x="193.2" y="10.8" width="4.4" height="4.4" fill="#b9b9c2" opacity="0.65"/><rect x="210.8" y="10.8" width="4.4" height="4.4" fill="#a3a3ad" opacity="0.59"/><rect x="215.2" y="10.8" width="4.4" height="4.4" fill="#9aa7b5" opacity="0.56"/><rect x="219.6" y="10.8" width="4.4" height="4.4" fill="#8f8f98" opacity="0.52"/><rect x="224.0" y="10.8" width="4.4" height="4.4" fill="#8f8f98" opacity="0.81"/><rect x="228.4" y="10.8" width="4.4" height="4.4" fill="#c4b9ad" opacity="0.61"/><rect x="232.8" y="10.8" width="4.4" height="4.4" fill="#cfcfd6" opacity="0.83"/></g></svg>
  <svg class="abs" style="left:1862px;top:170px" width="12" height="10" viewBox="0 0 12 10"><path d="M1.500 2.500 L6 7 L10.500 2.500" fill="none" stroke="#4a4f57" stroke-width="1.200"/></svg>

  <!-- section 1 -->
  <div class="bar" style="top:230px"></div>
  <div class="t" style="left:416px;top:226px;font-size:14px;line-height:20px;font-weight:500;-webkit-text-stroke:.1px #111;color:#111">本次减员名单<span style="font-size:12px">(可从下面的本单位在册人员列表选择减员人员)</span></div>
  <div class="btn" style="left:1399px;top:216px;width:186px">模板下载<span style="position:relative;left:-3px">（</span>含在册人员<span style="position:relative;left:3px">）</span></div>
  <div class="btn" style="left:1595px;top:216px;width:88px">模板下载</div>
  <div class="btn" style="left:1693px;top:216px;width:88px">批量导入</div>
  <div class="btn dis" style="left:1791px;top:216px;width:60px">提交</div>

  <!-- table 1 -->
  <div class="tb" style="left:406px;top:255px;width:1445px;height:243px">
    <div class="th" style="left:0px;width:60px;height:52px;line-height:53px">序号</div><div class="th" style="left:60px;width:80px;height:52px;line-height:53px">处理结果</div><div class="th" style="left:140px;width:120px;height:52px;line-height:53px">错误信息</div><div class="th" style="left:260px;width:200px;height:52px;line-height:53px"><span style="position:relative;top:-3px">减员原因</span><svg width="13" height="13" viewBox="0 0 13 13" style="position:relative;top:-2px;left:-1.500px;margin-left:5px"><circle cx="6.5" cy="6.5" r="6.5" fill="#409eff"/><text x="6.5" y="10.2" font-size="10" font-weight="700" fill="#fff" text-anchor="middle" font-family="Liberation Sans,sans-serif">?</text></svg></div><div class="th" style="left:460px;width:80px;height:52px;line-height:53px">姓名</div><div class="th" style="left:540px;width:170px;height:52px;line-height:53px">证件号码</div><div class="th" style="left:710px;width:110px;height:52px;line-height:53px">证件类型</div><div class="th" style="left:820px;width:60px;height:52px;line-height:53px">性别</div><div class="th" style="left:880px;width:180px;height:52px;line-height:53px">个人社保号</div><div class="th" style="left:1060px;width:120px;height:52px;line-height:53px">户籍类型</div><div class="th" style="left:1180px;width:110px;height:52px;line-height:53px">用工形式</div><div class="th" style="left:1290px;width:110px;height:52px;line-height:53px">人员身份</div>
    <div class="hl" style="top:112px;width:1445px"></div>
    <div class="emp" style="left:311px;top:72px">暂无待减员人员名单<span style="position:relative;left:3px">，</span>请从本单位在册人员中选择或批量导入。</div>
    <div class="hsb" style="left:0;top:225px;width:1443px;height:16px"><i style="left:17px;top:2px;width:1144px;height:13px"></i>
      <svg class="abs" style="left:5px;top:4px" width="6" height="9" viewBox="0 0 6 9"><path d="M5 0.500 L0.800 4.500 L5 8.500z" fill="#a3a3a3"/></svg>
      <svg class="abs" style="left:1432px;top:4px" width="6" height="9" viewBox="0 0 6 9"><path d="M1 0.500 L5.200 4.500 L1 8.500z" fill="#505050"/></svg>
    </div>
    <div class="abs" style="left:1343px;top:0;width:100px;height:241px;background:#fff;box-shadow:-1px 0 5px rgba(0,0,0,.09)">
      <div class="th" style="left:0;width:100px;height:52px;line-height:53px;border-right:none">操作</div>
      <div class="hl" style="top:112px;width:100px"></div>
      <div class="hsb" style="left:0;top:225px;width:100px;height:16px"><svg class="abs" style="left:89px;top:4px" width="6" height="9" viewBox="0 0 6 9"><path d="M1 0.500 L5.200 4.500 L1 8.500z" fill="#505050"/></svg></div>
    </div>
  </div>

  <!-- pagination 1 -->
  <div class="pg" style="top:510px"><div class="t" style="left:410px;word-spacing:1.3px">共 0 条</div>
    <div class="sel"><div class="t" style="left:17px;top:0;letter-spacing:.45px">10条/页</div><svg style="left:81px;top:9px" width="10" height="8" viewBox="0 0 10 8"><path d="M1 1.500 L5 5.500 L9 1.500" fill="none" stroke="#c0c4cc" stroke-width="1.100"/></svg></div>
    <div class="nb" style="left:587px"><svg style="left:10px;top:8px" width="9" height="12" viewBox="0 0 9 12"><path d="M6.500 1.500 L2.500 6 L6.500 10.500" fill="none" stroke="#c0c4cc" stroke-width="1.300"/></svg></div>
    <div class="nb on" style="left:627px">1</div>
    <div class="nb" style="left:667px"><svg style="left:10px;top:8px" width="9" height="12" viewBox="0 0 9 12"><path d="M2.500 1.500 L6.500 6 L2.500 10.500" fill="none" stroke="#c0c4cc" stroke-width="1.300"/></svg></div>
    <div class="t" style="left:726px">前往</div>
    <div class="inp">1</div>
    <div class="t" style="left:806px">页</div></div>
  <div class="btn pri" style="left:1709px;top:508px;width:142px">查看上次减员结果</div>

  <!-- section 2 -->
  <div class="bar" style="top:572px"></div>
  <div class="t" style="left:416px;top:568px;font-size:14px;line-height:20px;font-weight:500;-webkit-text-stroke:.1px #111;color:#111">本单位在册人员列表</div>

  <!-- tabs -->
  <div class="abs" style="left:406px;top:597px;width:1445px;height:123px;border:1px solid #dcdfe6;background:#fff">
    <div class="abs" style="left:0;top:0;width:1443px;height:39px;background:#f5f7fa;border-bottom:1px solid #e4e7ed"></div>
    <div class="abs" style="left:0;top:0;width:83px;height:39px;background:#fff;border-right:1px solid #dcdfe6"></div>
    <div class="t" style="left:20px;top:10px;font-size:14px;line-height:20px;color:#409eff">按姓名</div>
    <div class="t" style="left:102px;top:10px;font-size:14px;line-height:20px;color:#909399">按证件号码</div>
    <div class="t" style="left:213px;top:10px;font-size:14px;line-height:20px;color:#909399">按个人社保号</div>
    <div class="abs" style="left:15px;top:59px;width:1183px;height:34px;border:1px solid #dcdfe6;border-radius:4px"></div>
    <div class="t" style="left:19px;top:66px;font-size:14px;line-height:20px;color:#c0c4cc">请输入姓名(支持关键字查询<span style="position:relative;left:3px">，</span>最多可输8个<span style="position:relative;left:3px">，</span>每输入一个后按回车</div>
  </div>
  <div class="btn pri" style="left:1620px;top:657px;width:58px">查询</div>
  <div class="btn def" style="left:1688px;top:657px;width:60px">重置</div>

  <!-- table 2 -->
  <div class="tb" style="left:406px;top:730px;width:1445px;height:100px">
    <div class="th" style="left:0px;width:50px;height:38px;line-height:39px"></div><div class="th" style="left:50px;width:50px;height:38px;line-height:39px">序号</div><div class="th" style="left:100px;width:110px;height:38px;line-height:39px">姓名</div><div class="th" style="left:210px;width:237px;height:38px;line-height:39px">证件号码</div><div class="th" style="left:447px;width:144px;height:38px;line-height:39px">证件类型</div><div class="th" style="left:591px;width:65px;height:38px;line-height:39px">性别</div><div class="th" style="left:656px;width:237px;height:38px;line-height:39px">个人社保号</div><div class="th" style="left:893px;width:158px;height:38px;line-height:39px">户籍类型</div><div class="th" style="left:1051px;width:131px;height:38px;line-height:39px">用工形式</div><div class="th" style="left:1182px;width:131px;height:38px;line-height:39px">人员身份</div><div class="th" style="left:1313px;width:131px;height:38px;line-height:39px;border-right:none;text-indent:-2px">人员状态</div>
    <div class="abs" style="left:15px;top:11px;width:14px;height:14px;border:1px solid #dcdfe6;border-radius:2px;background:#edf2fc"></div>
    <div class="emp" style="left:252px;top:58px">请输入查询条件查询符合条件的在册人员或者直接点击[查询]查询本单位所有在册人员。</div>
  </div>

  <!-- pagination 2 -->
  <div class="pg" style="top:842px"><div class="t" style="left:410px;word-spacing:1.3px">共 0 条</div>
    <div class="sel"><div class="t" style="left:17px;top:0;letter-spacing:.45px">10条/页</div><svg style="left:81px;top:9px" width="10" height="8" viewBox="0 0 10 8"><path d="M1 1.500 L5 5.500 L9 1.500" fill="none" stroke="#c0c4cc" stroke-width="1.100"/></svg></div>
    <div class="nb" style="left:587px"><svg style="left:10px;top:8px" width="9" height="12" viewBox="0 0 9 12"><path d="M6.500 1.500 L2.500 6 L6.500 10.500" fill="none" stroke="#c0c4cc" stroke-width="1.300"/></svg></div>
    <div class="nb on" style="left:627px">1</div>
    <div class="nb" style="left:667px"><svg style="left:10px;top:8px" width="9" height="12" viewBox="0 0 9 12"><path d="M2.500 1.500 L6.500 6 L2.500 10.500" fill="none" stroke="#c0c4cc" stroke-width="1.300"/></svg></div>
    <div class="t" style="left:726px">前往</div>
    <div class="inp">1</div>
    <div class="t" style="left:806px">页</div></div>

  <!-- bottom hscroll -->
  <div class="hsb" style="left:378px;top:900px;width:1501px;height:17px"><i style="left:17px;top:2px;width:1461px;height:13px"></i>
    <svg class="abs" style="left:5px;top:4px" width="6" height="9" viewBox="0 0 6 9"><path d="M5 0.500 L0.800 4.500 L5 8.500z" fill="#a3a3a3"/></svg>
    <svg class="abs" style="left:1490px;top:4px" width="6" height="9" viewBox="0 0 6 9"><path d="M1 0.500 L5.200 4.500 L1 8.500z" fill="#505050"/></svg>
  </div>
</div>


<svg class="abs" style="left:370px;top:119px" width="20" height="26" viewBox="0 0 20 26"><path d="M3.300 3.300 L3.300 19.400 L7.300 16.100 L10.300 22.400 L12.900 21.200 L10 15.300 L15.100 14.900Z" fill="#fff" stroke="#1a1f33" stroke-width="1.150" stroke-linejoin="round"/></svg>
<div id="bot" class="abs"></div>
</body>
</html>
